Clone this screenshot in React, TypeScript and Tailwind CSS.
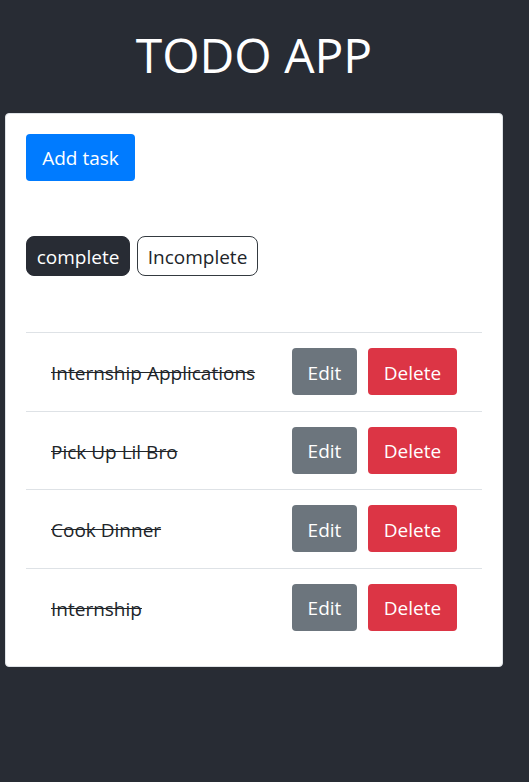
import React from 'react';

const tasks = ['Internship Applications', 'Pick Up Lil Bro', 'Cook Dinner', 'Internship'];

export default function App() {
  return (
    <div className="min-h-screen w-full bg-[#282c34] font-['Open_Sans',sans-serif] text-[#212529]">
      <div className="ml-[5px] w-[498px]">
        <h1 className="flex h-[113px] items-center justify-center pb-[4px] text-[48px] font-normal leading-none text-white">
          TODO APP
        </h1>

        <div className="rounded-[4px] border border-[#dee2e6] bg-white px-[20px] pb-[20px] pt-[20px]">
          <button className="h-[47px] w-[109px] rounded-[4px] bg-[#007bff] pt-[2px] text-[19px] text-white">
            Add task
          </button>

          <div className="mt-[55px] flex gap-[7px]">
            <button className="h-[40px] w-[104px] rounded-[8px] border border-[#282c34] bg-[#282c34] pt-[2px] text-[19px] text-white">
              complete
            </button>
            <button className="h-[40px] w-[121px] rounded-[8px] border border-[#343a40] bg-white pt-[2px] text-[19px] text-[#212529]">
              Incomplete
            </button>
          </div>

          <ul className="mt-[56px]">
            {tasks.map((task) => (
              <li
                key={task}
                className="flex h-[78.5px] items-center justify-between border-t border-[#dee2e6] pl-[25px] pr-[25px]"
              >
                <span className="pt-[3px] text-[19px] line-through">{task}</span>
                <div className="flex gap-[11px]">
                  <button className="h-[47px] w-[65px] rounded-[4px] bg-[#6c757d] pt-[2px] text-[19px] text-white">
                    Edit
                  </button>
                  <button className="h-[47px] w-[89px] rounded-[4px] bg-[#dc3545] pt-[2px] text-[19px] text-white">
                    Delete
                  </button>
                </div>
              </li>
            ))}
          </ul>
        </div>
      </div>
    </div>
  );
}
